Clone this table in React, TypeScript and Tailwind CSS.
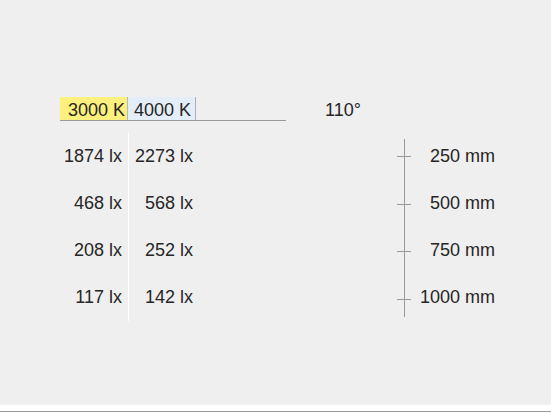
import React from 'react';

const rows = [
  { warm: '1874 lx', cool: '2273 lx', dist: '250 mm' },
  { warm: '468 lx', cool: '568 lx', dist: '500 mm' },
  { warm: '208 lx', cool: '252 lx', dist: '750 mm' },
  { warm: '117 lx', cool: '142 lx', dist: '1000 mm' },
];

const App: React.FC = () => {
  return (
    <div className="w-[551px] h-[413px] bg-white font-['Liberation_Sans',Arial,sans-serif] text-[18px] text-[#262626] overflow-hidden">
      <div className="h-[405px] bg-[#efefef] pt-[97px]">
        {/* Header: colour temperatures + beam angle */}
        <div className="flex items-center pl-[60px]">
          <div className="flex w-[226px] h-[24px] border-b border-[#9a9a9a]">
            <div className="w-[68px] h-[23px] bg-[#fdf07c] border-r border-[#b8b8b8] flex items-center justify-end pr-[2px] pt-[3px] leading-none">
              3000 K
            </div>
            <div className="w-[68px] h-[23px] bg-[#e4eef8] border-r border-[#b0b0b0] flex items-center justify-end pr-[4px] pt-[3px] leading-none">
              4000 K
            </div>
          </div>
          <div className="ml-[39px] pt-[2px] leading-none">110°</div>
        </div>

        {/* Values table */}
        <div className="flex items-start pl-[60px] mt-[12px]">
          <div className="w-[69px] flex flex-col border-r border-white">
            {rows.map((r) => (
              <div key={r.warm} className="h-[47px] flex items-center justify-end pr-[6px]">
                {r.warm}
              </div>
            ))}
          </div>
          <div className="w-[64px] flex flex-col">
            {rows.map((r) => (
              <div key={r.cool} className="h-[47px] flex items-center justify-end">
                {r.cool}
              </div>
            ))}
          </div>
          <div className="w-[204px]" />
          {/* Ruler */}
          <div className="w-[14px] mt-[6px] flex flex-col items-center">
            <div className="w-px h-[17px] bg-[#9a9a9a]" />
            <div className="w-[14px] h-px bg-[#9a9a9a]" />
            <div className="w-px h-[47px] bg-[#9a9a9a]" />
            <div className="w-[14px] h-px bg-[#9a9a9a]" />
            <div className="w-px h-[46px] bg-[#9a9a9a]" />
            <div className="w-[14px] h-px bg-[#9a9a9a]" />
            <div className="w-px h-[47px] bg-[#9a9a9a]" />
            <div className="w-[14px] h-px bg-[#9a9a9a]" />
            <div className="w-px h-[17px] bg-[#9a9a9a]" />
          </div>
          <div className="w-[84px] flex flex-col">
            {rows.map((r) => (
              <div key={r.dist} className="h-[47px] flex items-center justify-end">
                {r.dist}
              </div>
            ))}
          </div>
        </div>
      </div>
      <div className="h-[6px] bg-white" />
      <div className="h-px bg-[#999]" />
    </div>
  );
};

export default App;
